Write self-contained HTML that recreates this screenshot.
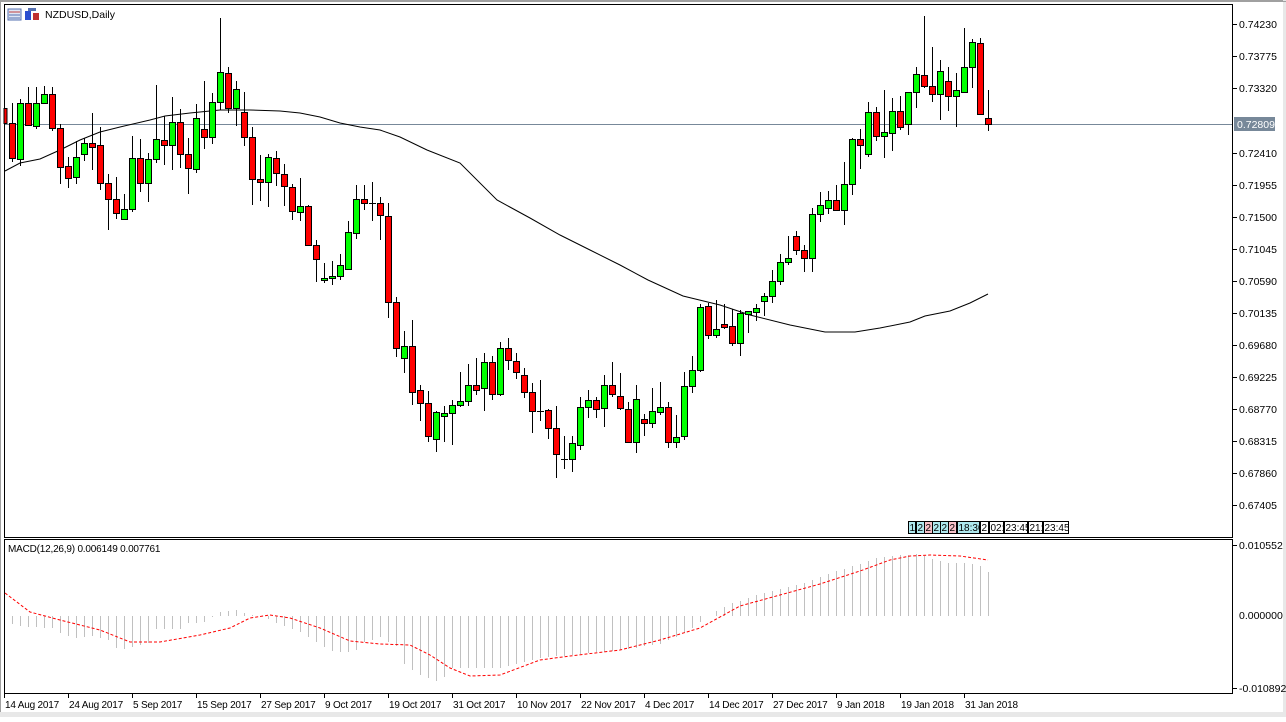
<!DOCTYPE html>
<html><head><meta charset="utf-8"><style>
html,body{margin:0;padding:0;background:#fff;}
body{width:1286px;height:717px;overflow:hidden;position:relative;font-family:"Liberation Sans",sans-serif;}
svg text{font-family:"Liberation Sans",sans-serif;font-size:10.5px;fill:#000;}
svg text.d{font-size:10px;letter-spacing:-0.2px;}
</style></head><body>
<svg id="s" width="1286" height="717" xmlns="http://www.w3.org/2000/svg" shape-rendering="crispEdges">
<rect x="0" y="0" width="1286" height="717" fill="#fff"/>
<rect x="0.5" y="0.5" width="1285" height="716" fill="none" stroke="#a0a0a0"/>
<rect x="1283" y="0" width="3" height="717" fill="#e8e8e8"/>
<rect x="0" y="712" width="1286" height="5" fill="#e8e8e8"/>
<line x1="0" y1="1.5" x2="1286" y2="1.5" stroke="#a0a0a0"/>
<g id="g"></g>
<rect x="8" y="9" width="13" height="11" fill="#dfe6f5" stroke="#5570b0"/>
<line x1="9" y1="12" x2="20" y2="12" stroke="#c04040"/><line x1="9" y1="15" x2="20" y2="15" stroke="#5570b0"/><line x1="9" y1="18" x2="20" y2="18" stroke="#5570b0"/>
<rect x="25" y="11" width="6" height="9" fill="#2b4fd0"/><rect x="33" y="13" width="6" height="7" fill="#c03030"/><rect x="28" y="8" width="8" height="3" fill="#5570b0"/>
<text x="45" y="18">NZDUSD,Daily</text>
<text x="8" y="552" class="d">MACD(12,26,9) 0.006149 0.007761</text>
</svg>
<script>
var g=document.getElementById('g');var h='';
function L(x1,y1,x2,y2,c,w){h+='<line x1="'+x1+'" y1="'+y1+'" x2="'+x2+'" y2="'+y2+'" stroke="'+c+'" stroke-width="'+(w||1)+'"/>';}
function T(x,y,t,c,a,cl){h+='<text x="'+x+'" y="'+y+'"'+(cl?' class="'+cl+'"':'')+(c?' style="fill:'+c+'"':'')+(a?' text-anchor="'+a+'"':'')+'>'+t+'</text>';}
h+='<rect x="4.5" y="4.5" width="1228" height="533" fill="none" stroke="#000"/>';
h+='<rect x="4.5" y="539.5" width="1228" height="154" fill="none" stroke="#000"/>';
var pl=[["0.74230",24],["0.73775",56],["0.73320",88],["0.72410",153],["0.71955",185],["0.71500",217],["0.71045",249],["0.70590",281],["0.70135",313],["0.69680",345],["0.69225",377],["0.68770",409],["0.68315",441],["0.67860",473],["0.67405",505]];
pl.forEach(function(p){L(1233,p[1]+0.5,1237,p[1]+0.5,'#000');T(1239,p[1]+4,p[0]);});
L(5,124.5,1232,124.5,'#778899');
h+='<rect x="1234" y="117" width="41" height="14" fill="#778899"/>';T(1237,128,'0.72809','#fff');
var ma=[[5,171],[20,163],[40,159],[60,150],[80,140],[100,132],[120,127],[150,120],[165,116],[190,113],[220,110],[250,110],[280,111],[300,113],[320,117],[340,123],[360,127],[380,130],[400,137],[427,150],[460,163],[497,200],[530,218],[560,235],[590,250],[620,265],[648,280],[683,296],[720,305],[750,315],[790,325],[825,332],[855,332],[880,328],[910,322],[925,316],[950,311],[970,303],[988,294]];
h+='<polyline fill="none" stroke="#000" stroke-width="1" shape-rendering="auto" points="'+ma.map(function(p){return p.join(',')}).join(' ')+'"/>';
var c=[[123,158,0,103,162],[103,159,1,99,166],[103,125,0,87,126],[103,126,1,87,129],[94,103,1,86,103],[94,128,0,87,131],[128,167,0,124,184],[166,178,0,157,188],[157,177,1,141,184],[143,154,1,138,161],[143,147,0,113,170],[145,183,0,127,190],[183,199,0,174,230],[199,213,0,177,219],[209,219,1,194,220],[158,209,1,136,212],[158,183,0,139,192],[159,183,1,153,202],[139,159,1,85,163],[140,145,0,116,165],[122,145,1,97,170],[122,154,0,109,168],[154,168,0,138,194],[118,169,1,104,173],[129,137,0,81,149],[102,137,1,93,144],[72,102,1,18,110],[73,108,0,67,113],[89,108,1,81,126],[112,137,0,92,146],
[137,179,0,127,205],[179,182,0,155,201],[157,182,1,154,207],[158,173,0,151,186],[174,186,0,164,206],[187,211,0,184,220],[206,212,1,178,221],[206,245,0,205,245],[245,259,0,240,282],[278,280,1,263,283],[276,278,1,261,285],[265,276,1,254,280],[232,269,1,221,269],[199,233,1,185,239],[199,203,0,185,210],[203,203,2,182,221],[203,215,0,197,240],[216,302,0,203,318],[302,348,0,297,357],[346,358,1,331,373],[346,392,0,320,405],[390,403,0,385,421],[403,436,0,391,442],[412,439,1,411,452],[413,416,1,406,442],[405,413,1,400,445],[401,405,1,372,407],[385,401,1,364,406],[385,390,0,358,395],[362,388,1,353,411],[362,394,0,356,400],[348,394,1,342,396],[348,360,0,338,370],[361,372,0,353,379],[375,392,0,368,398],
[392,411,0,383,433],[411,411,2,380,421],[410,428,0,409,439],[428,454,0,406,478],[459,459,2,436,469],[443,459,1,436,472],[407,445,1,397,450],[400,407,1,390,418],[400,409,0,397,418],[385,408,1,375,427],[385,394,0,362,397],[396,408,0,373,410],[409,442,0,402,443],[399,442,1,385,453],[419,423,0,414,436],[411,423,1,388,428],[407,412,1,382,415],[407,442,0,402,448],[437,442,1,415,448],[386,436,1,372,440],[370,386,1,356,393],[307,370,1,304,372],[306,335,0,303,339],[329,335,1,300,338],[324,327,0,304,329],[326,343,0,309,346],[313,343,1,310,356],[311,314,1,311,333],[308,312,1,304,321],[296,301,1,293,316],[281,296,1,270,303],[262,281,1,254,285],[258,262,1,236,265],[236,250,0,231,255],[250,258,0,245,272],[214,258,1,208,272],[205,214,1,192,222],[200,208,1,191,214],[200,210,0,185,210],[184,210,1,162,225],[139,184,1,138,195],[139,145,0,129,169],[112,154,1,102,157],[112,136,0,107,141],[132,136,1,90,158],[111,133,1,98,151],[111,127,0,96,130],[92,124,1,92,135],[74,92,1,67,108],[75,86,0,16,88],[86,94,0,47,102],[71,94,1,60,120],[81,96,0,67,111],[90,96,1,73,127],[67,92,1,28,93],[42,67,1,39,88],[43,114,0,38,115],[118,124,0,90,131]];
h+='<rect x="4" y="108.5" width="3" height="15" fill="#f00" stroke="#000"/>';
c.forEach(function(k,i){var x=12+8*i;L(x+0.5,k[3],x+0.5,k[4],'#000');
 if(k[2]==2||k[1]-k[0]<1){L(x-3,k[0]+0.5,x+4,k[0]+0.5,'#000');}
 else h+='<rect x="'+(x-2.5)+'" y="'+(k[0]+0.5)+'" width="6" height="'+(k[1]-k[0])+'" fill="'+(k[2]?'#0f0':'#f00')+'" stroke="#000"/>';});
var tb=[[908,7,'1','#aee8ee'],[916,8,'2','#aee8ee'],[924,8,'2','#f6c0c8'],[932,8,'2','#aee8ee'],[940,8,'2','#aee8ee'],[948,8,'2','#f6c0c8'],[957,22,'18:30','#aee8ee'],[980,8,'2','#fff'],[989,14,'02:','#fff'],[1004,23,'23:45','#fff'],[1028,14,'21:','#fff'],[1043,25,'23:45','#fff']];
tb.forEach(function(b){h+='<svg x="'+b[0]+'" y="521" width="'+(b[1]+1)+'" height="13"><rect x="0.5" y="0.5" width="'+b[1]+'" height="12" fill="'+b[3]+'" stroke="#000"/><text x="1.5" y="10" style="font-size:10px">'+b[2]+'</text></svg>';});
L(1233,545.5,1237,545.5,'#000');T(1239,549,'0.010552');T(1239,619,'0.000000');L(1233,688.5,1237,688.5,'#000');T(1239,692,'-0.010892');
var hp=[[12,624],[28,627],[52,628],[60,633],[76,638],[92,636],[108,640],[116,648],[124,649],[148,643],[156,629],[180,629],[188,623],[204,622],[220,612],[236,610],[252,615],[268,619],[284,626],[300,632],[316,642],[332,651],[348,652],[356,650],[364,642],[380,637],[396,646],[404,664],[420,675],[436,681],[444,677],[452,668],[484,668],[500,668],[540,658],[580,654],[620,650],[660,644],[690,630],[710,614],[730,604],[760,594],[800,584],[840,570],[880,557],[900,555],[920,554],[935,560],[950,563],[970,563],[980,566],[988,572]];
function interp(a,x){for(var j=0;j<a.length-1;j++){if(x>=a[j][0]&&x<=a[j+1][0]){var t=(x-a[j][0])/(a[j+1][0]-a[j][0]);return a[j][1]+t*(a[j+1][1]-a[j][1]);}}return a[a.length-1][1];}
for(var i=0;i<123;i++){var x=12+8*i;var y=Math.round(interp(hp,x));L(x+0.5,616,x+0.5,y,'#c0c0c0');}
var sg=[[5,593],[30,612],[60,620],[100,630],[130,642],[160,642],[200,635],[230,628],[250,618],[270,615],[290,618],[320,628],[350,641],[380,644],[410,645],[430,655],[450,668],[470,676],[500,675],[540,660],[570,656],[620,650],[660,640],[700,628],[740,606],[780,595],[820,584],[860,571],[890,560],[910,556],[930,555],[960,556],[988,560]];
h+='<polyline fill="none" stroke="#f00" stroke-dasharray="3,2" shape-rendering="auto" points="'+sg.map(function(p){return p.join(',')}).join(' ')+'"/>';
var d=[["14 Aug 2017",4],["24 Aug 2017",68],["5 Sep 2017",132],["15 Sep 2017",196],["27 Sep 2017",260],["9 Oct 2017",324],["19 Oct 2017",388],["31 Oct 2017",452],["10 Nov 2017",516],["22 Nov 2017",580],["4 Dec 2017",644],["14 Dec 2017",708],["27 Dec 2017",772],["9 Jan 2018",836],["19 Jan 2018",900],["31 Jan 2018",964]];
d.forEach(function(p){L(p[1]+0.5,694,p[1]+0.5,698,'#000');T(p[1]+1,708,p[0],null,null,'d');});
g.innerHTML=h;
</script>
</body></html>
